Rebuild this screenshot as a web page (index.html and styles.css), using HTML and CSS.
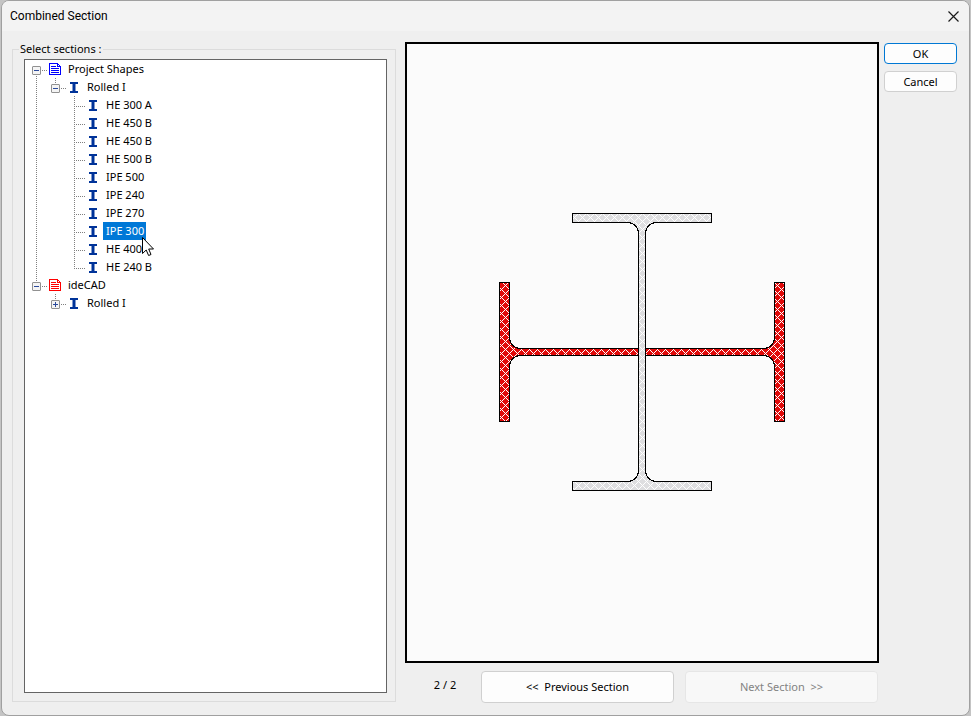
FILE: index.html
```html
<!DOCTYPE html>
<html lang="en">
<head>
<meta charset="utf-8">
<title>Combined Section</title>
<link rel="stylesheet" href="styles.css">
</head>
<body>
<svg class="defs" aria-hidden="true">
  <symbol id="page" viewBox="0 0 13 12"><g shape-rendering="crispEdges" fill="none" stroke="currentColor"><path d="M.5 .5H8.5L11.5 3.5V11.5H.5Z" fill="#fff"/><path d="M8.5 1V3.5H11M2 3.5H7M2 5.5H10M2 7.5H10M2 9.5H10"/></g></symbol>
  <symbol id="beam" viewBox="0 0 9 11"><path d="M0 0H8V2H5.5V9H8V11H0V9H2.5V2H0Z" fill="#003399"/></symbol>
</svg>
<main class="window">
  <header class="titlebar">
    <h1>Combined Section</h1>
    <button class="close" aria-label="Close"><svg width="11" height="11" viewBox="0 0 11 11"><path d="M.5 .5L10.5 10.5M10.5 .5L.5 10.5" stroke="#1a1a1a" stroke-width="1.2"/></svg></button>
  </header>
  <div class="content">
    <fieldset class="sections">
      <legend>Select sections :</legend>
      <ul class="tree">
        <li>
          <div class="row"><button class="toggle open" aria-label="Collapse Project Shapes"></button><svg class="page blue"><use href="#page"/></svg><span class="label">Project Shapes</span></div>
          <ul>
            <li>
              <div class="row"><button class="toggle open" aria-label="Collapse Rolled I"></button><svg class="beam"><use href="#beam"/></svg><span class="label">Rolled I</span></div>
              <ul>
                <li><div class="row"><svg class="beam"><use href="#beam"/></svg><span class="label">HE 300 A</span></div></li>
                <li><div class="row"><svg class="beam"><use href="#beam"/></svg><span class="label">HE 450 B</span></div></li>
                <li><div class="row"><svg class="beam"><use href="#beam"/></svg><span class="label">HE 450 B</span></div></li>
                <li><div class="row"><svg class="beam"><use href="#beam"/></svg><span class="label">HE 500 B</span></div></li>
                <li><div class="row"><svg class="beam"><use href="#beam"/></svg><span class="label">IPE 500</span></div></li>
                <li><div class="row"><svg class="beam"><use href="#beam"/></svg><span class="label">IPE 240</span></div></li>
                <li><div class="row"><svg class="beam"><use href="#beam"/></svg><span class="label">IPE 270</span></div></li>
                <li><div class="row"><svg class="beam"><use href="#beam"/></svg><span class="label selected">IPE 300<svg class="cursor" viewBox="0 0 12 19"><path d="M.5 .5V16.5L4.2 13L6.6 18.5L9 17.5L6.7 12H11.5Z" fill="#fff" stroke="#000"/></svg></span></div></li>
                <li><div class="row"><svg class="beam"><use href="#beam"/></svg><span class="label">HE 400</span></div></li>
                <li><div class="row"><svg class="beam"><use href="#beam"/></svg><span class="label">HE 240 B</span></div></li>
              </ul>
            </li>
          </ul>
        </li>
        <li>
          <div class="row"><button class="toggle open" aria-label="Collapse ideCAD"></button><svg class="page red"><use href="#page"/></svg><span class="label">ideCAD</span></div>
          <ul>
            <li><div class="row"><button class="toggle" aria-label="Expand Rolled I"></button><svg class="beam"><use href="#beam"/></svg><span class="label">Rolled I</span></div></li>
          </ul>
        </li>
      </ul>
    </fieldset>
    <section class="preview">
      <svg class="drawing" viewBox="-235 -308 470 617" role="img" aria-label="Section preview">
        <defs>
          <pattern id="hatch-red" x="7" y="5" width="8" height="8" patternUnits="userSpaceOnUse"><path fill="#e10a0a" d="M0 0H8V8H0Z"/><path stroke="#fff" d="M0 .5h1M1 1.5h1m5 0h1M2 2.5h1m3 0h1M3 3.5h1m1 0h1M4 4.5h1M3 5.5h1m1 0h1M2 6.5h1m3 0h1M1 7.5h1m5 0h1"/></pattern>
          <pattern id="hatch-gray" x="0" y="5" width="8" height="8" patternUnits="userSpaceOnUse"><path fill="#dedee0" d="M0 0H8V8H0Z"/><path stroke="#fff" d="M0 .5h1M1 1.5h1m5 0h1M2 2.5h1m3 0h1M3 3.5h1m1 0h1M4 4.5h1M3 5.5h1m1 0h1M2 6.5h1m3 0h1M1 7.5h1m5 0h1"/></pattern>
        </defs>
        <g stroke="#000" shape-rendering="crispEdges">
          <path fill="url(#hatch-red)" d="M-142.5-69.5H-132.5V-14.5A11 11 0 0 0-121.5-3.5H121.5A11 11 0 0 0 132.5-14.5V-69.5H142.5V69.5H132.5V14.5A11 11 0 0 0 121.5 3.5H-121.5A11 11 0 0 0-132.5 14.5V69.5H-142.5Z"/>
          <path fill="url(#hatch-gray)" d="M-69.5-138.5H69.5V-129.5H14.5A11 11 0 0 0 3.5-118.5V118.5A11 11 0 0 0 14.5 129.5H69.5V138.5H-69.5V129.5H-14.5A11 11 0 0 0-3.5 118.5V-118.5A11 11 0 0 0-14.5-129.5H-69.5Z"/>
        </g>
      </svg>
      <nav class="pager">
        <span class="count">2 / 2</span>
        <button>&lt;&lt;&nbsp; Previous Section</button>
        <button disabled>Next Section&nbsp; &gt;&gt;</button>
      </nav>
    </section>
    <div class="actions">
      <button class="primary">OK</button>
      <button>Cancel</button>
    </div>
  </div>
</main>
</body>
</html>
```
FILE: styles.css
```css
* { box-sizing: border-box; }
body {
  margin: 0;
  padding: 0 1px;
  height: 100vh;
  background: #c4c4c4;
  color: #000;
  font: 11px/18px "Noto Sans", "Open Sans", sans-serif;
}
.defs { position: absolute; width: 0; height: 0; }
.window {
  display: flex;
  flex-direction: column;
  height: 100%;
  border: 1px solid #a0a0a0;
  border-radius: 8px;
  background: #efefef;
  overflow: hidden;
}
.titlebar {
  display: flex;
  align-items: center;
  justify-content: space-between;
  flex: none;
  height: 30px;
  padding: 0 10px 0 8px;
  background: #f3f3f3;
}
h1 { margin: 0; font: 12px/18px Roboto, "Open Sans", sans-serif; }
button {
  padding: 0;
  border: 1px solid #d0d0d0;
  border-radius: 4px;
  background: #fdfdfd;
  color: #000;
  font: inherit;
}
button:disabled { border-color: #e6e6e6; background: #f8f8f8; color: #838383; }
.close { display: flex; border: 0; background: none; }
.content {
  display: grid;
  grid-template-columns: minmax(0, 393fr) minmax(0, 474fr) 78px;
  grid-template-rows: minmax(0, 1fr);
  flex: 1;
  min-height: 0;
  padding: 11px 12px 12px 10px;
}
.sections {
  display: flex;
  min-width: 0;
  margin: 0 9px 1px 0;
  padding: 3px 8px 8px 11px;
  border: 1px solid #dcdcdc;
}
legend { margin-left: -5px; padding: 0 1px; line-height: 14px; }
.tree {
  flex: 1;
  min-width: 0;
  padding-left: 2px;
  border: 1px solid #646464;
  background: #fff;
}
ul { margin: 0; padding: 0; list-style: none; }
li ul { padding-left: 19px; }
li {
  background: repeating-linear-gradient(#808080 0 1px, transparent 1px 2px) 9px 0 / 1px 100% no-repeat;
}
li:last-child { background-size: 1px 10px; }
.tree > li:first-child { background-position: 9px 10px; }
.row {
  display: grid;
  grid-template-columns: 19px 19px max-content;
  align-items: center;
  justify-items: center;
  height: 18px;
  background: repeating-linear-gradient(90deg, #808080 0 1px, transparent 1px 2px) 9px 10px / 12px 1px no-repeat;
}
.toggle {
  grid-column: 1;
  width: 9px;
  height: 9px;
  margin-top: 2px;
  border: 1px solid #919191;
  border-radius: 1px;
  background:
    linear-gradient(#2b4a9b, #2b4a9b) center / 5px 1px no-repeat,
    linear-gradient(#2b4a9b, #2b4a9b) center / 1px 5px no-repeat,
    #f4f4f4;
}
.toggle.open { background: linear-gradient(#2b4a9b, #2b4a9b) center / 5px 1px no-repeat, #f4f4f4; }
.page { grid-column: 2; width: 13px; height: 12px; }
.beam { grid-column: 2; width: 9px; height: 11px; margin-top: 1px; }
.blue { color: #00f; }
.red { color: #f00; }
.label { position: relative; grid-column: 3; padding: 0 2px 0 3px; }
.selected { background: #0078d7; color: #fff; }
.cursor { position: absolute; z-index: 1; left: calc(100% - 4px); top: 15px; width: 12px; height: 19px; }
.preview {
  display: flex;
  flex-direction: column;
  min-width: 0;
}
.drawing {
  flex: 1;
  min-height: 0;
  width: 100%;
  border: 2px solid #000;
  background: #fbfbfb;
}
.pager {
  display: grid;
  grid-template-columns: 65px 1fr 1fr;
  gap: 11px;
  margin-top: 8px;
  padding-right: 1px;
}
.pager button { height: 32px; }
.count { padding: 5px 0 0 15px; text-align: center; }
.actions {
  display: flex;
  flex-direction: column;
  gap: 7px;
  padding: 1px 0 0 5px;
}
.actions button { height: 21px; }
.actions .primary { border-color: #0078d4; }
```
